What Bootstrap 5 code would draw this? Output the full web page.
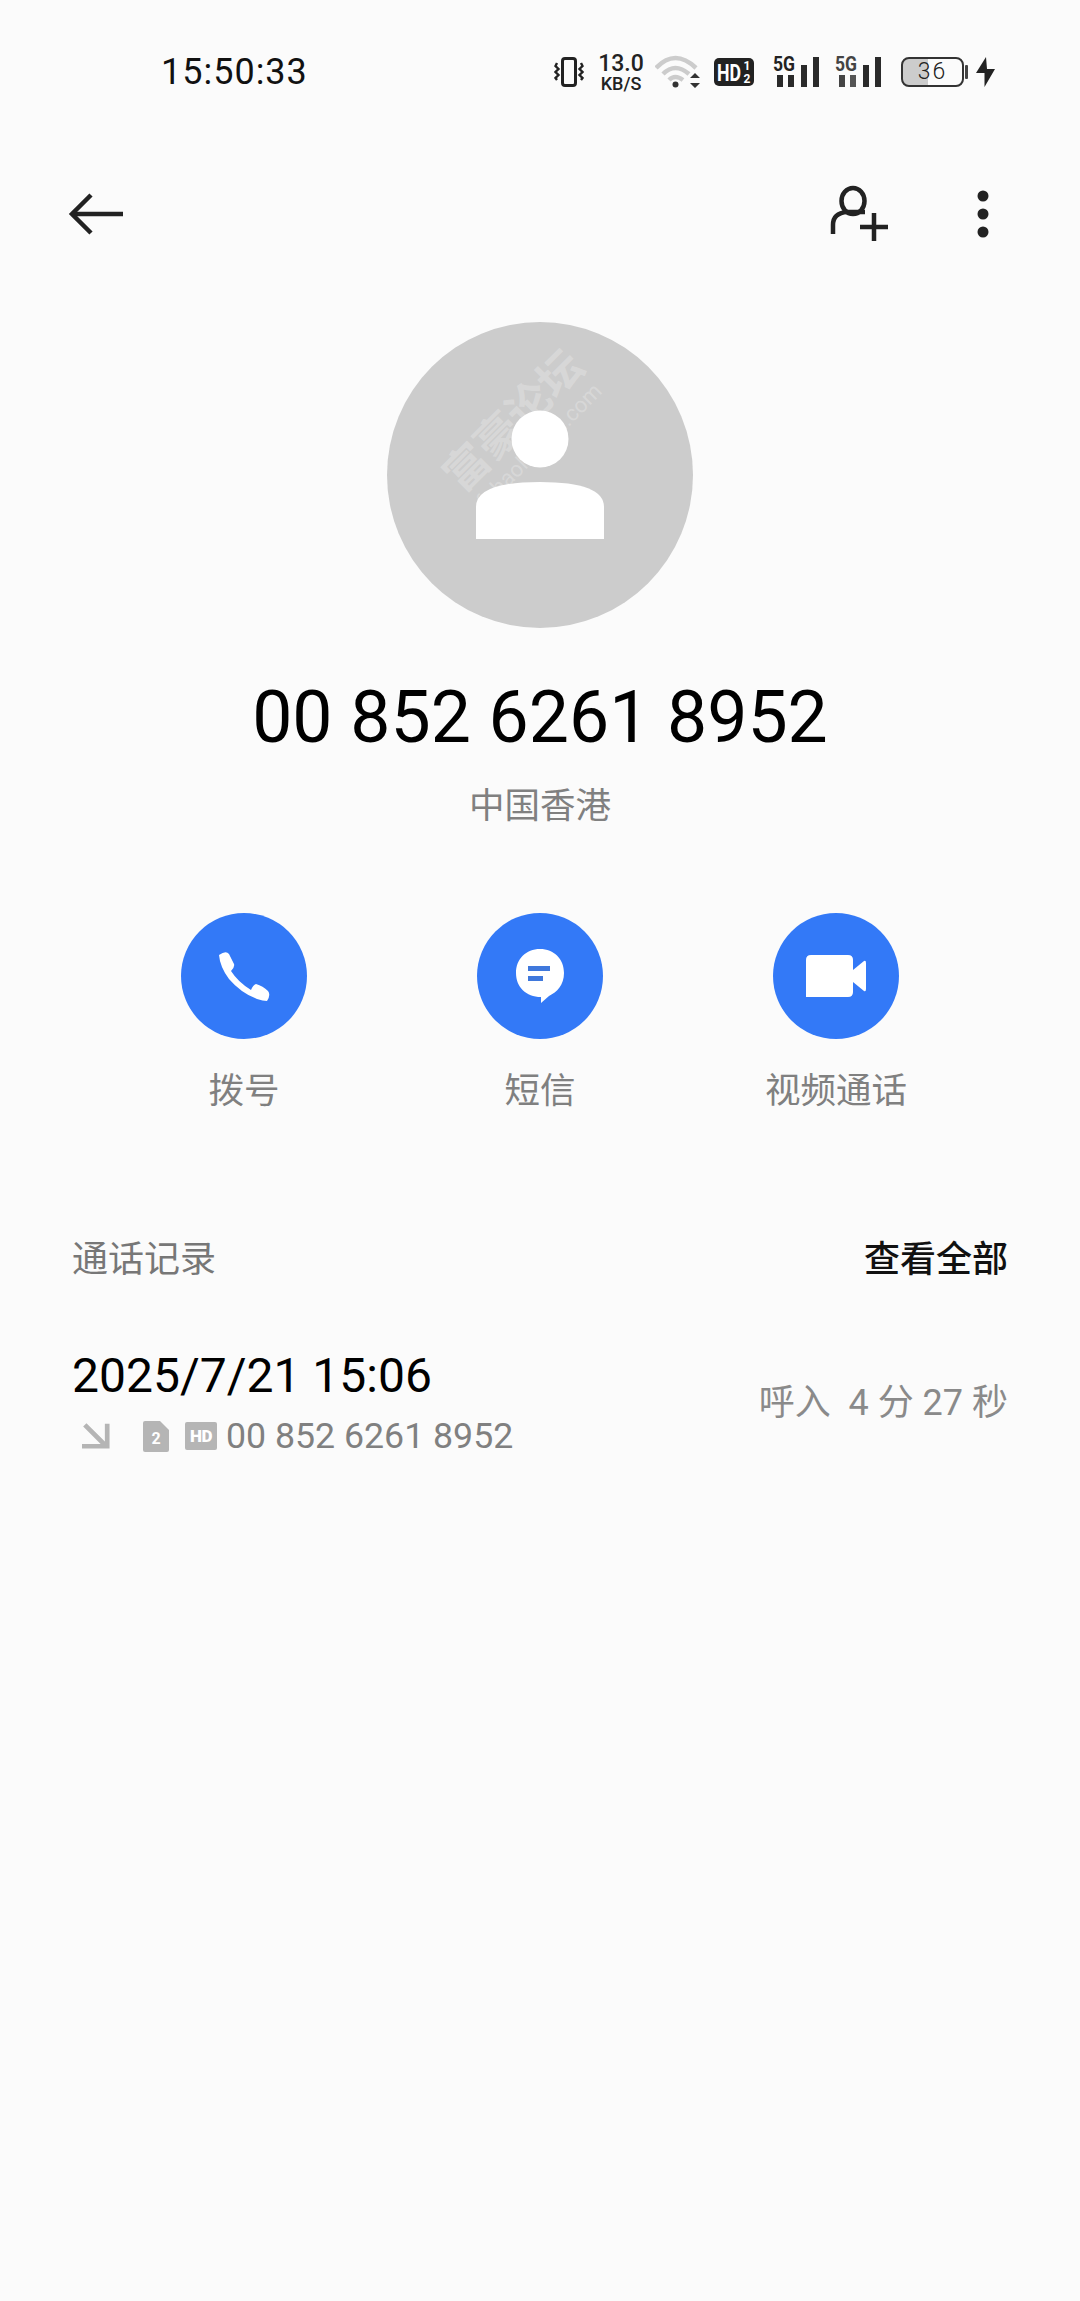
<!DOCTYPE html>
<html lang="zh-CN">
<head>
  <meta charset="UTF-8">
  <title>通话详情</title>
  <link href="https://cdn.jsdelivr.net/npm/bootstrap@5.3.0/dist/css/bootstrap.min.css" rel="stylesheet">
  <style>
    body {
      background: #fbfbfb;
      min-height: 2301px;
      font-family: Roboto, "Noto Sans CJK SC", sans-serif;
      color: #000;
    }
    svg { display: block; flex: none; }
    .status-row { height: 144px; padding-left: 161px; padding-right: 85px; }
    .clock { font-size: 36px; line-height: 42px; letter-spacing: 1px; color: #111; }
    .speed { width: 46px; margin: 0 11px 0 14px; text-align: center; color: #222; font-weight: 500; }
    .speed-top { font-size: 23px; line-height: 23px; }
    .speed-unit { font-size: 18px; line-height: 18px; }
    .hd-tag { margin: 0 19px 0 14px; }
    .sig-two { margin-left: 15px; }
    .power {
      width: 63px; height: 30px; margin-left: 19px; border: 2.5px solid #333; border-radius: 8px;
      background: linear-gradient(to right, #ccc 43%, transparent 43%);
      font-size: 23px; font-weight: 300; line-height: 25px; letter-spacing: 2px; color: #222; text-align: center;
    }
    .power-nub { margin-right: 8px; }
    .top-row { height: 140px; padding-left: 68px; padding-right: 87px; }
    .top-tools { gap: 84px; }
    .caller-pic { margin: 38px auto 0; }
    .caller-num { margin-top: 48px; font-size: 71.5px; line-height: 84px; color: #000; }
    .caller-area { margin-top: 21px; font-size: 35.5px; line-height: 50px; color: #808080; }
    .actions { margin: 82px 0 0; padding: 0 96px; }
    .action-ball { width: 126px; height: 126px; background: #3379f7; }
    .action-text { margin-top: 27px; font-size: 35.5px; line-height: 50px; color: #808080; }
    .log-wrap { padding: 0 72px; }
    .log-head { margin-top: 119px; font-size: 36px; line-height: 50px; }
    .log-title { color: #777; }
    .log-all { color: #111; font-weight: 500; }
    .log-item { margin-top: 61px; }
    .log-date { font-size: 48px; line-height: 60px; color: #000; }
    .log-sub { margin-top: 8px; font-size: 35.7px; line-height: 44px; color: #808080; }
    .ic-arrow { margin-left: 10px; }
    .ic-sim { margin: 0 16px 0 33px; }
    .sub-num { margin-left: 9px; }
    .log-meta { padding-top: 2px; font-size: 36px; color: #8a8a8a; }
  </style>
</head>
<body>
  <div class="status-row d-flex align-items-center justify-content-between">
    <div class="clock">15:50:33</div>
    <div class="d-flex align-items-center">
      <!-- vibrate -->
      <svg width="30" height="30" viewBox="0 0 30 30" fill="none" stroke="#222">
        <rect x="8.5" y="1.5" width="13" height="27" rx="2.5" stroke-width="3"/>
        <path d="M3 6 l-1.5 3 3 3 -3 3 3 3 -3 3 1.5 2M27 6 l1.5 3 -3 3 3 3 -3 3 3 3 -1.5 2" stroke-width="2.4"/>
      </svg>
      <div class="speed">
        <div class="speed-top">13.0</div>
        <div class="speed-unit">KB/S</div>
      </div>
      <!-- wifi -->
      <svg width="45" height="34" viewBox="0 0 45 34" fill="none">
        <path d="M1 13 Q20 -7 41 13" stroke="#ccc" stroke-width="4.5"/>
        <path d="M8 19 Q20 7 34 19" stroke="#ccc" stroke-width="4.5"/>
        <path d="M14 25 Q20 19 28 25" stroke="#ccc" stroke-width="4.5"/>
        <circle cx="20.5" cy="29.5" r="3" fill="#333"/>
        <path d="M35 23 l5 -5 5 5zM35 28 l5 5 5 -5z" fill="#333"/>
      </svg>
      <svg class="hd-tag" width="40" height="44" viewBox="0 -8 40 44">
        <rect width="40" height="28" rx="5" fill="#222"/>
        <text transform="translate(3 23) scale(1 1.3)" font-family="Roboto" font-weight="700" font-size="19" textLength="24" lengthAdjust="spacingAndGlyphs" fill="#fff">HD</text>
        <text x="33" y="12" text-anchor="middle" font-family="Roboto" font-weight="700" font-size="12" fill="#fff">1</text>
        <text x="33" y="25" text-anchor="middle" font-family="Roboto" font-weight="700" font-size="12" fill="#fff">2</text>
      </svg>
      <!-- 5G signal, both cards -->
      <svg width="47" height="44" viewBox="0 -7 47 44">
        <text x="0" y="14" font-family="Roboto" font-weight="700" font-size="20" textLength="22" lengthAdjust="spacingAndGlyphs" fill="#222">5G</text>
        <g fill="#2a2a2a">
          <rect x="4" y="18" width="6" height="12"/><rect x="15" y="18" width="6" height="12"/>
          <rect x="28" y="8" width="6" height="22"/><rect x="40" y="0" width="6" height="30"/>
        </g>
      </svg>
      <svg class="sig-two" width="47" height="44" viewBox="0 -7 47 44">
        <text x="0" y="14" font-family="Roboto" font-weight="700" font-size="20" textLength="22" lengthAdjust="spacingAndGlyphs" fill="#444">5G</text>
        <g fill="#2a2a2a">
          <rect x="4" y="18" width="6" height="12" fill="#444"/><rect x="15" y="18" width="6" height="12" fill="#555"/>
          <rect x="28" y="8" width="6" height="22"/><rect x="40" y="0" width="6" height="30"/>
        </g>
      </svg>
      <div class="power">36</div>
      <svg class="power-nub" width="4" height="14" viewBox="0 0 4 14"><rect x="1" width="3" height="14" rx="1" fill="#444"/></svg>
      <svg width="19" height="30" viewBox="0 0 19 30"><path d="M10 0 L0 16 H8.5 V30 L19 12 H11Z" fill="#222"/></svg>
    </div>
  </div>

  <div class="top-row d-flex align-items-center justify-content-between">
    <svg width="56" height="44" viewBox="0 0 56 44" fill="none" stroke="#222" stroke-width="4.5">
      <path d="M23 3 L4 22 L23 41"/>
      <path d="M4 22 H55"/>
    </svg>
    <div class="top-tools d-flex align-items-center">
      <svg width="60" height="58" viewBox="0 0 60 58" fill="none" stroke="#222" stroke-width="4.5">
        <ellipse cx="24" cy="16" rx="11.5" ry="13"/>
        <path d="M4 49 V40 Q4 28 18 27 L36 27"/>
        <path d="M45 28 V56 M31 42 H59"/>
      </svg>
      <svg width="20" height="48" viewBox="0 0 20 48" fill="#222">
        <circle cx="10" cy="6" r="5.5"/><circle cx="10" cy="24" r="5.5"/><circle cx="10" cy="42" r="5.5"/>
      </svg>
    </div>
  </div>

  <svg class="caller-pic" width="306" height="306" viewBox="0 0 306 306">
    <circle cx="153" cy="153" r="153" fill="#ccc"/>
    <g transform="translate(3 3) rotate(-45 126 98)" fill="#fff" fill-opacity=".24" text-anchor="middle" font-family="'Noto Sans CJK SC', sans-serif">
      <text x="126" y="110" font-size="44" font-weight="700">富豪论坛</text>
      <text x="126" y="138" font-size="22" font-family="Roboto">fuhaoluntan.com</text>
    </g>
    <circle cx="153" cy="117" r="28.5" fill="#fff"/>
    <path d="M89 217 V185 Q89 160 153 160 Q217 160 217 185 V217Z" fill="#fff"/>
  </svg>

  <div class="caller-num text-center">00 852 6261 8952</div>
  <div class="caller-area text-center">中国香港</div>

  <div class="actions row g-0 text-center">
    <div class="col-4 d-flex flex-column align-items-center">
      <div class="action-ball rounded-circle d-flex align-items-center justify-content-center">
        <svg width="54" height="50" viewBox="0 0 54 50">
          <path d="M2 4 Q9 -1 12 3 L17 13 Q18 16 14 20 Q21 31 34 39 Q36 34 39 33 Q46 35 51 40 Q54 44 50 50 Q46 50 40 48 Q24 42 12 28 Q3 16 2 4Z" fill="#fff"/>
        </svg>
      </div>
      <div class="action-text">拨号</div>
    </div>
    <div class="col-4 d-flex flex-column align-items-center">
      <div class="action-ball rounded-circle d-flex align-items-center justify-content-center">
        <svg width="48" height="54" viewBox="0 0 48 54">
          <path d="M24 0 C38 0 48 10 48 24 C48 36 41 43 33 47 L25 54 V48 C10 48 0 38 0 24 C0 10 10 0 24 0Z" fill="#fff"/>
          <rect x="12" y="17" width="22" height="5" fill="#3f78dc"/>
          <rect x="12" y="27" width="15" height="5" fill="#3f78dc"/>
        </svg>
      </div>
      <div class="action-text">短信</div>
    </div>
    <div class="col-4 d-flex flex-column align-items-center">
      <div class="action-ball rounded-circle d-flex align-items-center justify-content-center">
        <svg width="60" height="42" viewBox="0 0 60 42" fill="#fff">
          <path d="M5 0 H42 Q47 0 47 5 V37 Q47 42 42 42 H0 V5 Q0 0 5 0Z"/>
          <path d="M47 15 L58 6 Q60 5 60 8 V34 Q60 37 58 36 L47 27Z"/>
        </svg>
      </div>
      <div class="action-text">视频通话</div>
    </div>
  </div>

  <div class="log-wrap">
    <div class="log-head d-flex justify-content-between">
      <div class="log-title">通话记录</div>
      <div class="log-all">查看全部</div>
    </div>
    <div class="log-item d-flex align-items-center justify-content-between">
      <div>
        <div class="log-date">2025/7/21 15:06</div>
        <div class="log-sub d-flex align-items-center">
          <svg class="ic-arrow" width="28" height="28" viewBox="0 0 30 30" fill="none" stroke="#b5b5b5" stroke-width="5">
            <path d="M3 3 L26 26 M0 26 H27 V2"/>
          </svg>
          <svg class="ic-sim" width="26" height="31" viewBox="0 0 26 31">
            <path d="M2 0 H17 L26 9 V29 Q26 31 24 31 H2 Q0 31 0 29 V2 Q0 0 2 0Z" fill="#b5b5b5"/>
            <text x="13" y="23" text-anchor="middle" font-family="Roboto" font-weight="700" font-size="16" fill="#fff">2</text>
          </svg>
          <svg width="32" height="28" viewBox="0 0 32 28">
            <rect width="32" height="28" rx="2" fill="#b5b5b5"/>
            <text x="16" y="20" text-anchor="middle" font-family="Roboto" font-weight="900" font-size="17" letter-spacing="-.5" fill="#fff">HD</text>
          </svg>
          <span class="sub-num">00 852 6261 8952</span>
        </div>
      </div>
      <div class="log-meta">呼入 &nbsp;4 分 27 秒</div>
    </div>
  </div>

  <script src="https://cdn.jsdelivr.net/npm/bootstrap@5.3.0/dist/js/bootstrap.bundle.min.js"></script>
</body>
</html>
